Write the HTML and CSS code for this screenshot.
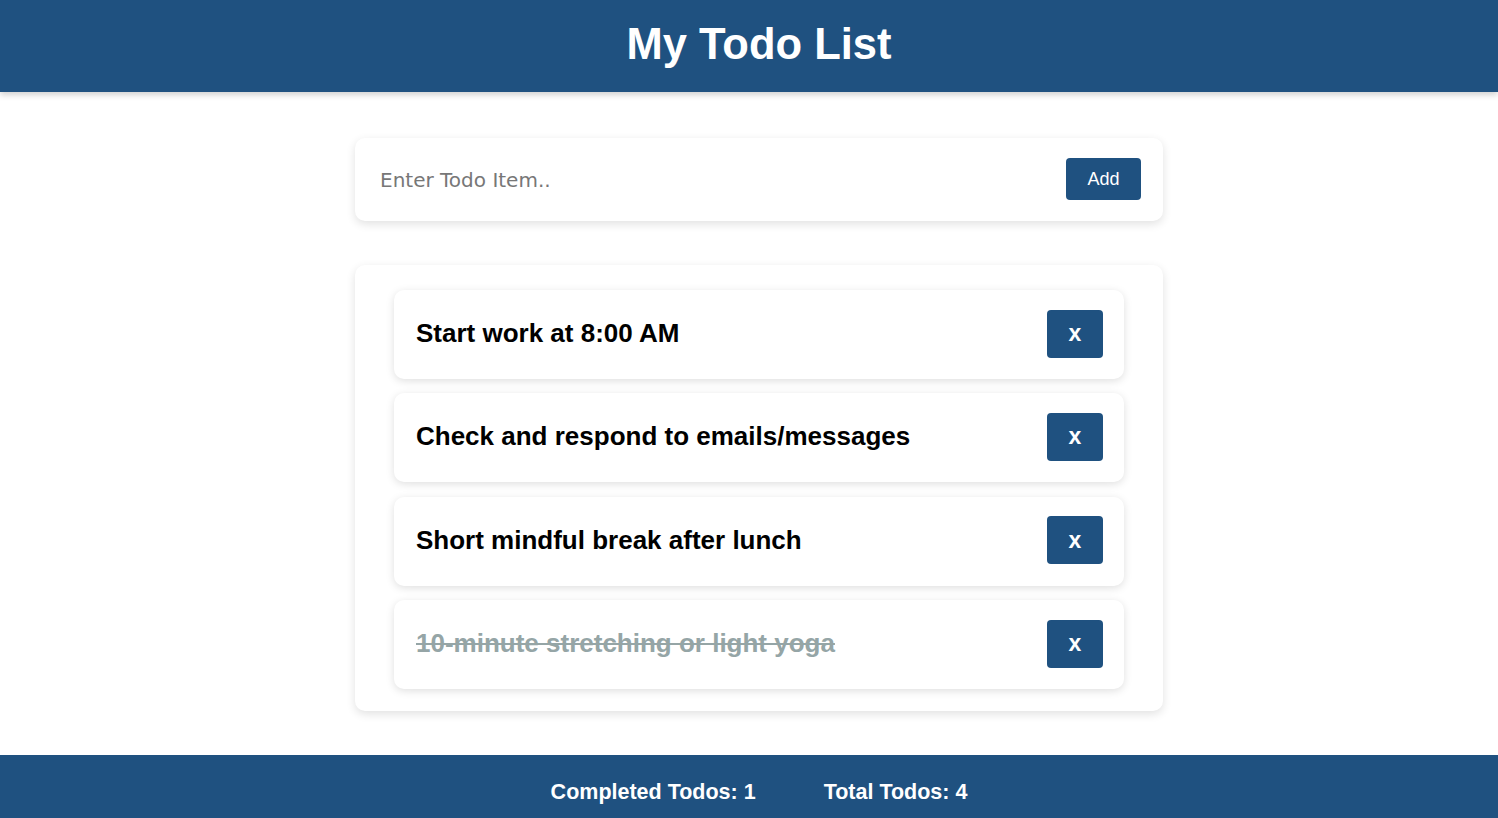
FILE: index.html
```html
<!DOCTYPE html>
<html lang="en">
<head>
<meta charset="utf-8">
<title>My Todo List</title>
<link rel="stylesheet" href="styles.css">
</head>
<body>
<header class="topbar">
  <h1 class="title">My Todo List</h1>
</header>
<main class="main">
  <form class="entry card">
    <input class="entry-input" type="text" placeholder="Enter Todo Item..">
    <button class="add-btn" type="button">Add</button>
  </form>
  <ul class="list card">
    <li class="item"><span class="item-text">Start work at 8:00 AM</span><button class="del-btn" type="button">x</button></li>
    <li class="item"><span class="item-text">Check and respond to emails/messages</span><button class="del-btn" type="button">x</button></li>
    <li class="item"><span class="item-text">Short mindful break after lunch</span><button class="del-btn" type="button">x</button></li>
    <li class="item"><span class="item-text done">10-minute stretching or light yoga</span><button class="del-btn" type="button">x</button></li>
  </ul>
</main>
<footer class="footer">
  <span class="stat">Completed Todos: 1</span>
  <span class="stat">Total Todos: 4</span>
</footer>
</body>
</html>
```
FILE: styles.css
```css
* { box-sizing: border-box; }
html, body { margin: 0; padding: 0; background: #ffffff; }
body { font-family: "Liberation Sans", Arial, sans-serif; }

.topbar {
  height: 92px;
  background: #1f5180;
  display: flex;
  align-items: center;
  justify-content: center;
  padding-left: 20px;
  box-shadow: 0 3px 6px rgba(0,0,0,0.18);
  position: relative;
}
.title {
  margin: 0;
  color: #ffffff;
  font-size: 43.5px;
  font-weight: 700;
  line-height: 1;
  padding-bottom: 2px;
}

.main {
  display: flex;
  flex-direction: column;
  align-items: center;
  padding: 46px 0 44px 20px;
  gap: 44px;
}
.card {
  width: 808px;
  background: #ffffff;
  border-radius: 10px;
  box-shadow: 0 3px 10px rgba(0,0,0,0.12);
}

.entry {
  margin: 0;
  height: 83px;
  display: flex;
  align-items: center;
  padding: 0 22px 1px 25px;
}
.entry-input {
  flex: 1;
  border: none;
  outline: none;
  background: transparent;
  font-family: "DejaVu Sans", Verdana, sans-serif;
  font-size: 20px;
  color: #333;
  padding: 0 0 0 0;
  margin-top: 2px;
}
.entry-input::placeholder { color: #777777; }
.add-btn {
  width: 75px;
  height: 42px;
  border: none;
  border-radius: 4px;
  background: #1f5180;
  color: #ffffff;
  font-family: "Liberation Sans", Arial, sans-serif;
  font-size: 18px;
  padding: 0;
}

.list {
  list-style: none;
  margin: 0;
  padding: 25px 39px 22px;
  display: flex;
  flex-direction: column;
  gap: 14.4px;
}
.item {
  height: 89px;
  display: flex;
  align-items: center;
  justify-content: space-between;
  padding: 0 21px 2px 22px;
  background: #ffffff;
  border-radius: 10px;
  box-shadow: 0 2px 8px rgba(0,0,0,0.13);
}
.item-text {
  font-size: 26px;
  font-weight: 700;
  color: #000000;
}
.item-text.done {
  color: #95a5a6;
  text-decoration: line-through;
}
.del-btn {
  width: 56px;
  height: 48px;
  border: none;
  border-radius: 4px;
  background: #1f5180;
  color: #ffffff;
  font-family: "Liberation Sans", Arial, sans-serif;
  font-size: 23px;
  font-weight: 700;
  padding: 0;
}

.footer {
  height: 63px;
  background: #1f5180;
  display: flex;
  justify-content: center;
  align-items: center;
  gap: 68px;
  padding: 11px 0 0 20px;
}
.stat {
  color: #ffffff;
  font-size: 21.5px;
  font-weight: 700;
}
```
